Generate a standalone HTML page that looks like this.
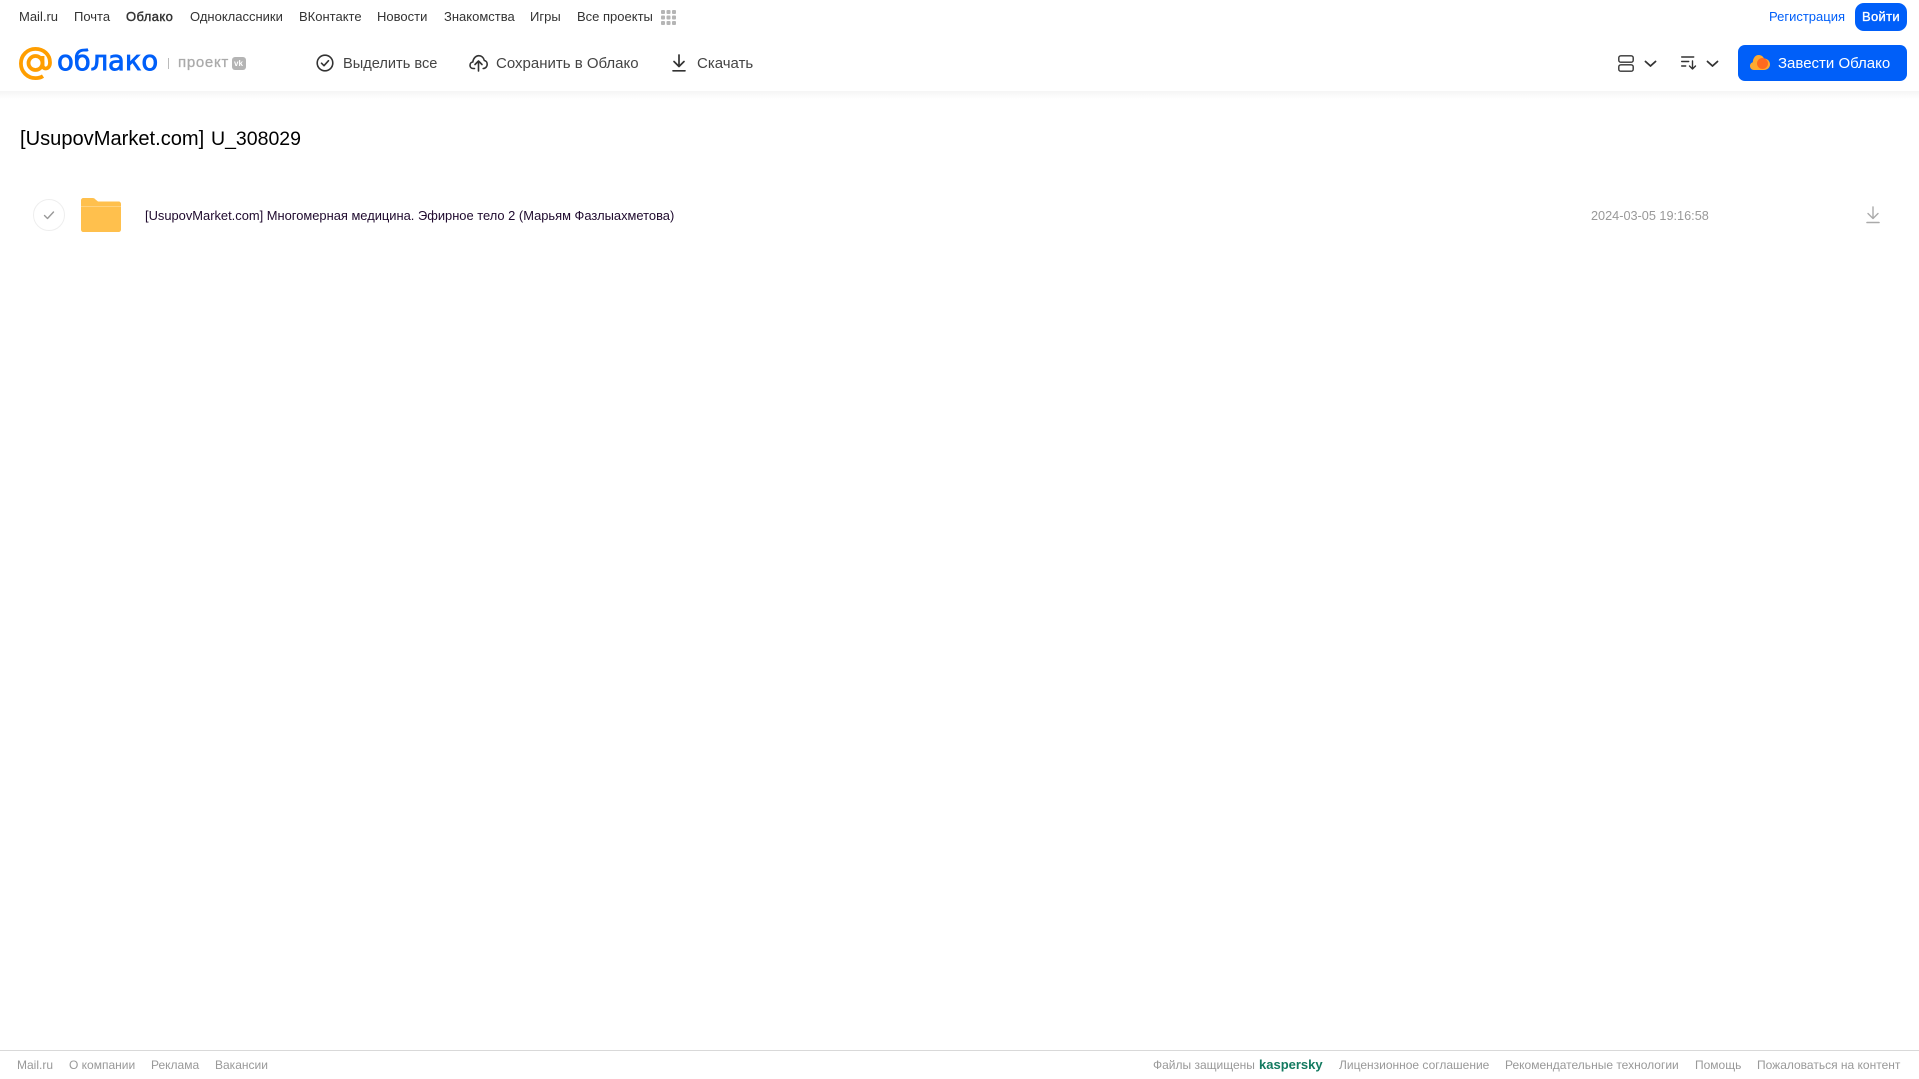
<!DOCTYPE html>
<html lang="ru">
<head>
<meta charset="utf-8">
<title>Облако</title>
<style>
html,body{margin:0;padding:0;background:#fff}
body{width:1919px;height:1079px;overflow:hidden;position:relative;font-family:"Liberation Sans",Arial,sans-serif}
.t{position:absolute;white-space:nowrap;line-height:20px}
.nav{font-size:13px;color:#333;top:7px}
.tb{font-size:15px;color:#444;top:54px}
.ft{font-size:12px;color:#999;top:1055px}
svg{position:absolute;display:block}
#shadow{position:absolute;left:0;top:91px;width:1919px;height:8px;background:linear-gradient(#f5f5f5,#fff)}
#line{position:absolute;left:0;top:1050px;width:1919px;height:1px;background:#d9d9d9}
.btn{position:absolute;background:#005ff9}
</style>
</head>
<body>
<div id="shadow"></div>

<span class="t nav" style="left:19px">Mail.ru</span>
<span class="t nav" style="left:74px">Почта</span>
<span class="t nav" style="left:126px;letter-spacing:.4px;-webkit-text-stroke:.4px #333">Облако</span>
<span class="t nav" style="left:190px">Одноклассники</span>
<span class="t nav" style="left:299px">ВКонтакте</span>
<span class="t nav" style="left:377px">Новости</span>
<span class="t nav" style="left:444px">Знакомства</span>
<span class="t nav" style="left:530px">Игры</span>
<span class="t nav" style="left:577px">Все проекты</span>
<svg style="left:661px;top:10px" width="15" height="15" viewBox="0 0 15 15" fill="#b5b5b5">
<rect x="0" y="0" width="4" height="4" rx="1"/><rect x="5.500" y="0" width="4" height="4" rx="1"/><rect x="11" y="0" width="4" height="4" rx="1"/>
<rect x="0" y="5.500" width="4" height="4" rx="1"/><rect x="5.500" y="5.500" width="4" height="4" rx="1"/><rect x="11" y="5.500" width="4" height="4" rx="1"/>
<rect x="0" y="11" width="4" height="4" rx="1"/><rect x="5.500" y="11" width="4" height="4" rx="1"/><rect x="11" y="11" width="4" height="4" rx="1"/>
</svg>

<span class="t" style="left:1769px;top:7px;font-size:13px;color:#005ff9">Регистрация</span>
<div class="btn" style="left:1855px;top:3px;width:52px;height:28px;border-radius:9px"></div>
<span class="t" style="left:1862px;top:7px;font-size:13px;color:#fff;letter-spacing:.3px;-webkit-text-stroke:.35px #fff">Войти</span>

<svg style="left:19px;top:47px" width="33" height="33" viewBox="0 0 33 33" fill="none" stroke="#ff9e00" stroke-width="3.800">
<circle cx="16.500" cy="16" r="7"/>
<path d="M23.500 9v9c0 5 7.500 5 7.500-2.500C31 7.500 24.500 1.900 16.500 1.900 8.300 1.900 1.900 8.300 1.900 16.500S8.300 31.100 16.500 31.100c3 0 5.500-.7 7.500-2"/>
</svg>
<span class="t" style="left:57px;top:44px;line-height:34px;font-size:27.500px;color:#005ff9;font-family:'DejaVu Sans',sans-serif;letter-spacing:-.1px;-webkit-text-stroke:.8px #005ff9">облако</span>
<div style="position:absolute;left:168px;top:58px;width:1px;height:11px;background:#bbb"></div>
<span class="t" style="left:178px;top:53px;font-size:15px;color:#aaa;letter-spacing:.7px;-webkit-text-stroke:.3px #aaa">проект</span>
<div style="position:absolute;left:232px;top:57px;width:14px;height:13px;border-radius:3px;background:#b4b4b4"></div>
<span class="t" style="left:234px;top:58px;line-height:11px;font-size:8px;font-weight:bold;color:#fff">vk</span>

<svg style="left:316px;top:54px" width="18" height="18" viewBox="0 0 18 18" fill="none" stroke="#333" stroke-width="1.600">
<circle cx="9" cy="9" r="7.800"/><path d="M5.500 9.200l2.500 2.500 4.500-5" stroke-linecap="round" stroke-linejoin="round"/>
</svg>
<span class="t tb" style="left:343px;font-size:14.600px">Выделить все</span>

<svg style="left:469px;top:54px" width="19" height="18" viewBox="0 0 19 18" fill="none" stroke="#333" stroke-width="1.600" stroke-linecap="round" stroke-linejoin="round">
<path d="M5.500 14.500H4.200C2.300 14.500 1 13 1 11.200c0-1.700 1.200-3 2.800-3.200C4.300 4.300 6.800 1.700 9.800 1.700c2.800 0 5 2 5.500 4.800 1.900.3 2.900 2 2.900 3.700 0 2.300-1.500 4.300-4 4.300"/>
<path d="M9.500 17V7.500M6 10.500l3.500-3.500 3.500 3.500"/>
</svg>
<span class="t tb" style="left:496px">Сохранить в Облако</span>

<svg style="left:671px;top:54px" width="16" height="18" viewBox="0 0 16 18" fill="none" stroke="#333" stroke-width="1.700" stroke-linecap="round" stroke-linejoin="round">
<path d="M8 1v11M3 7.500l5 5 5-5M2 16.800h12"/>
</svg>
<span class="t tb" style="left:697px">Скачать</span>

<svg style="left:1618px;top:55px" width="16" height="17" viewBox="0 0 16 17" fill="none" stroke="#333" stroke-width="1.400">
<rect x=".8" y=".8" width="14.400" height="6.400" rx="2"/><rect x=".8" y="9.800" width="14.400" height="6.400" rx="2"/>
</svg>
<svg style="left:1644px;top:60px" width="13" height="8" viewBox="0 0 13 8" fill="none" stroke="#333" stroke-width="1.800" stroke-linecap="round" stroke-linejoin="round">
<path d="M1.500 1.500l5 4.500 5-4.500"/>
</svg>
<svg style="left:1681px;top:56px" width="16" height="14" viewBox="0 0 16 14" fill="none" stroke="#333" stroke-width="1.400" stroke-linecap="round" stroke-linejoin="round">
<path d="M.7 1h12M.7 5.500h7M.7 10h4M11.500 5v8M8.500 10l3 3 3-3"/>
</svg>
<svg style="left:1706px;top:60px" width="13" height="8" viewBox="0 0 13 8" fill="none" stroke="#333" stroke-width="1.800" stroke-linecap="round" stroke-linejoin="round">
<path d="M1.500 1.500l5 4.500 5-4.500"/>
</svg>

<div class="btn" style="left:1738px;top:45px;width:169px;height:36px;border-radius:7px"></div>
<svg style="left:1750px;top:54px" width="20" height="17" viewBox="0 0 20 17">
<path d="M4 16C1.500 16 0 14 0 12c0-2 1.200-3.400 2.800-3.800C3 4 5.500 1 8.500 1c2.500 0 4.500 1.300 5.500 3.500 3.200 0 6 2.500 6 5.800 0 3.300-2.500 5.700-6 5.700z" fill="#ffa930"/>
<circle cx="12.500" cy="9.500" r="5.500" fill="#ff6a1f"/>
</svg>
<span class="t" style="left:1778px;top:54px;font-size:15px;color:#fff">Завести Облако</span>

<span class="t" style="left:20px;top:125px;line-height:28px;font-size:20.100px;color:#000">[UsupovMarket.com]</span>
<span class="t" style="left:211px;top:125px;line-height:28px;font-size:19.500px;color:#000">U_308029</span>

<svg style="left:33px;top:199px" width="32" height="32" viewBox="0 0 32 32" fill="none">
<circle cx="16" cy="16" r="15.500" stroke="#eee"/>
<path d="M11.500 16.500l3 3 6-6.500" stroke="#999" stroke-width="1.400" stroke-linecap="round" stroke-linejoin="round"/>
</svg>
<svg style="left:81px;top:198px" width="40" height="34" viewBox="0 0 40 34">
<path d="M0 2.500C0 1 1 0 2.500 0h9c1.500 0 2.300.6 3 1.500L17 3.500h20.500C39 3.500 40 4.500 40 6v25.500c0 1.500-1 2.500-2.500 2.500h-35C1 34 0 33 0 31.500z" fill="#ffc04d"/>
<rect x="0" y="8" width="40" height="1" fill="#ffd27f"/>
</svg>
<span class="t" style="left:145px;top:206px;font-size:12.900px;color:#1f0a2e">[UsupovMarket.com] Многомерная медицина. Эфирное тело 2 (Марьям Фазлыахметова)</span>
<span class="t" style="left:1591px;top:206px;font-size:12.700px;color:#999">2024-03-05 19:16:58</span>
<svg style="left:1866px;top:206px" width="14" height="18" viewBox="0 0 14 18" fill="none" stroke="#aaa" stroke-width="1.400" stroke-linecap="round" stroke-linejoin="round">
<path d="M7 1v11M2 7.500l5 5 5-5"/><path d="M1 16.500h12" stroke-width="1.600"/>
</svg>

<div id="line"></div>
<span class="t ft" style="left:17px">Mail.ru</span>
<span class="t ft" style="left:69px">О компании</span>
<span class="t ft" style="left:151px">Реклама</span>
<span class="t ft" style="left:215px">Вакансии</span>
<span class="t ft" style="left:1153px">Файлы защищены</span>
<span class="t" style="left:1259px;top:1055px;font-size:13px;font-weight:bold;color:#137a60">kaspersky</span>
<span class="t ft" style="left:1339px">Лицензионное соглашение</span>
<span class="t ft" style="left:1505px">Рекомендательные технологии</span>
<span class="t ft" style="left:1695px">Помощь</span>
<span class="t ft" style="left:1757px">Пожаловаться на контент</span>
</body>
</html>
